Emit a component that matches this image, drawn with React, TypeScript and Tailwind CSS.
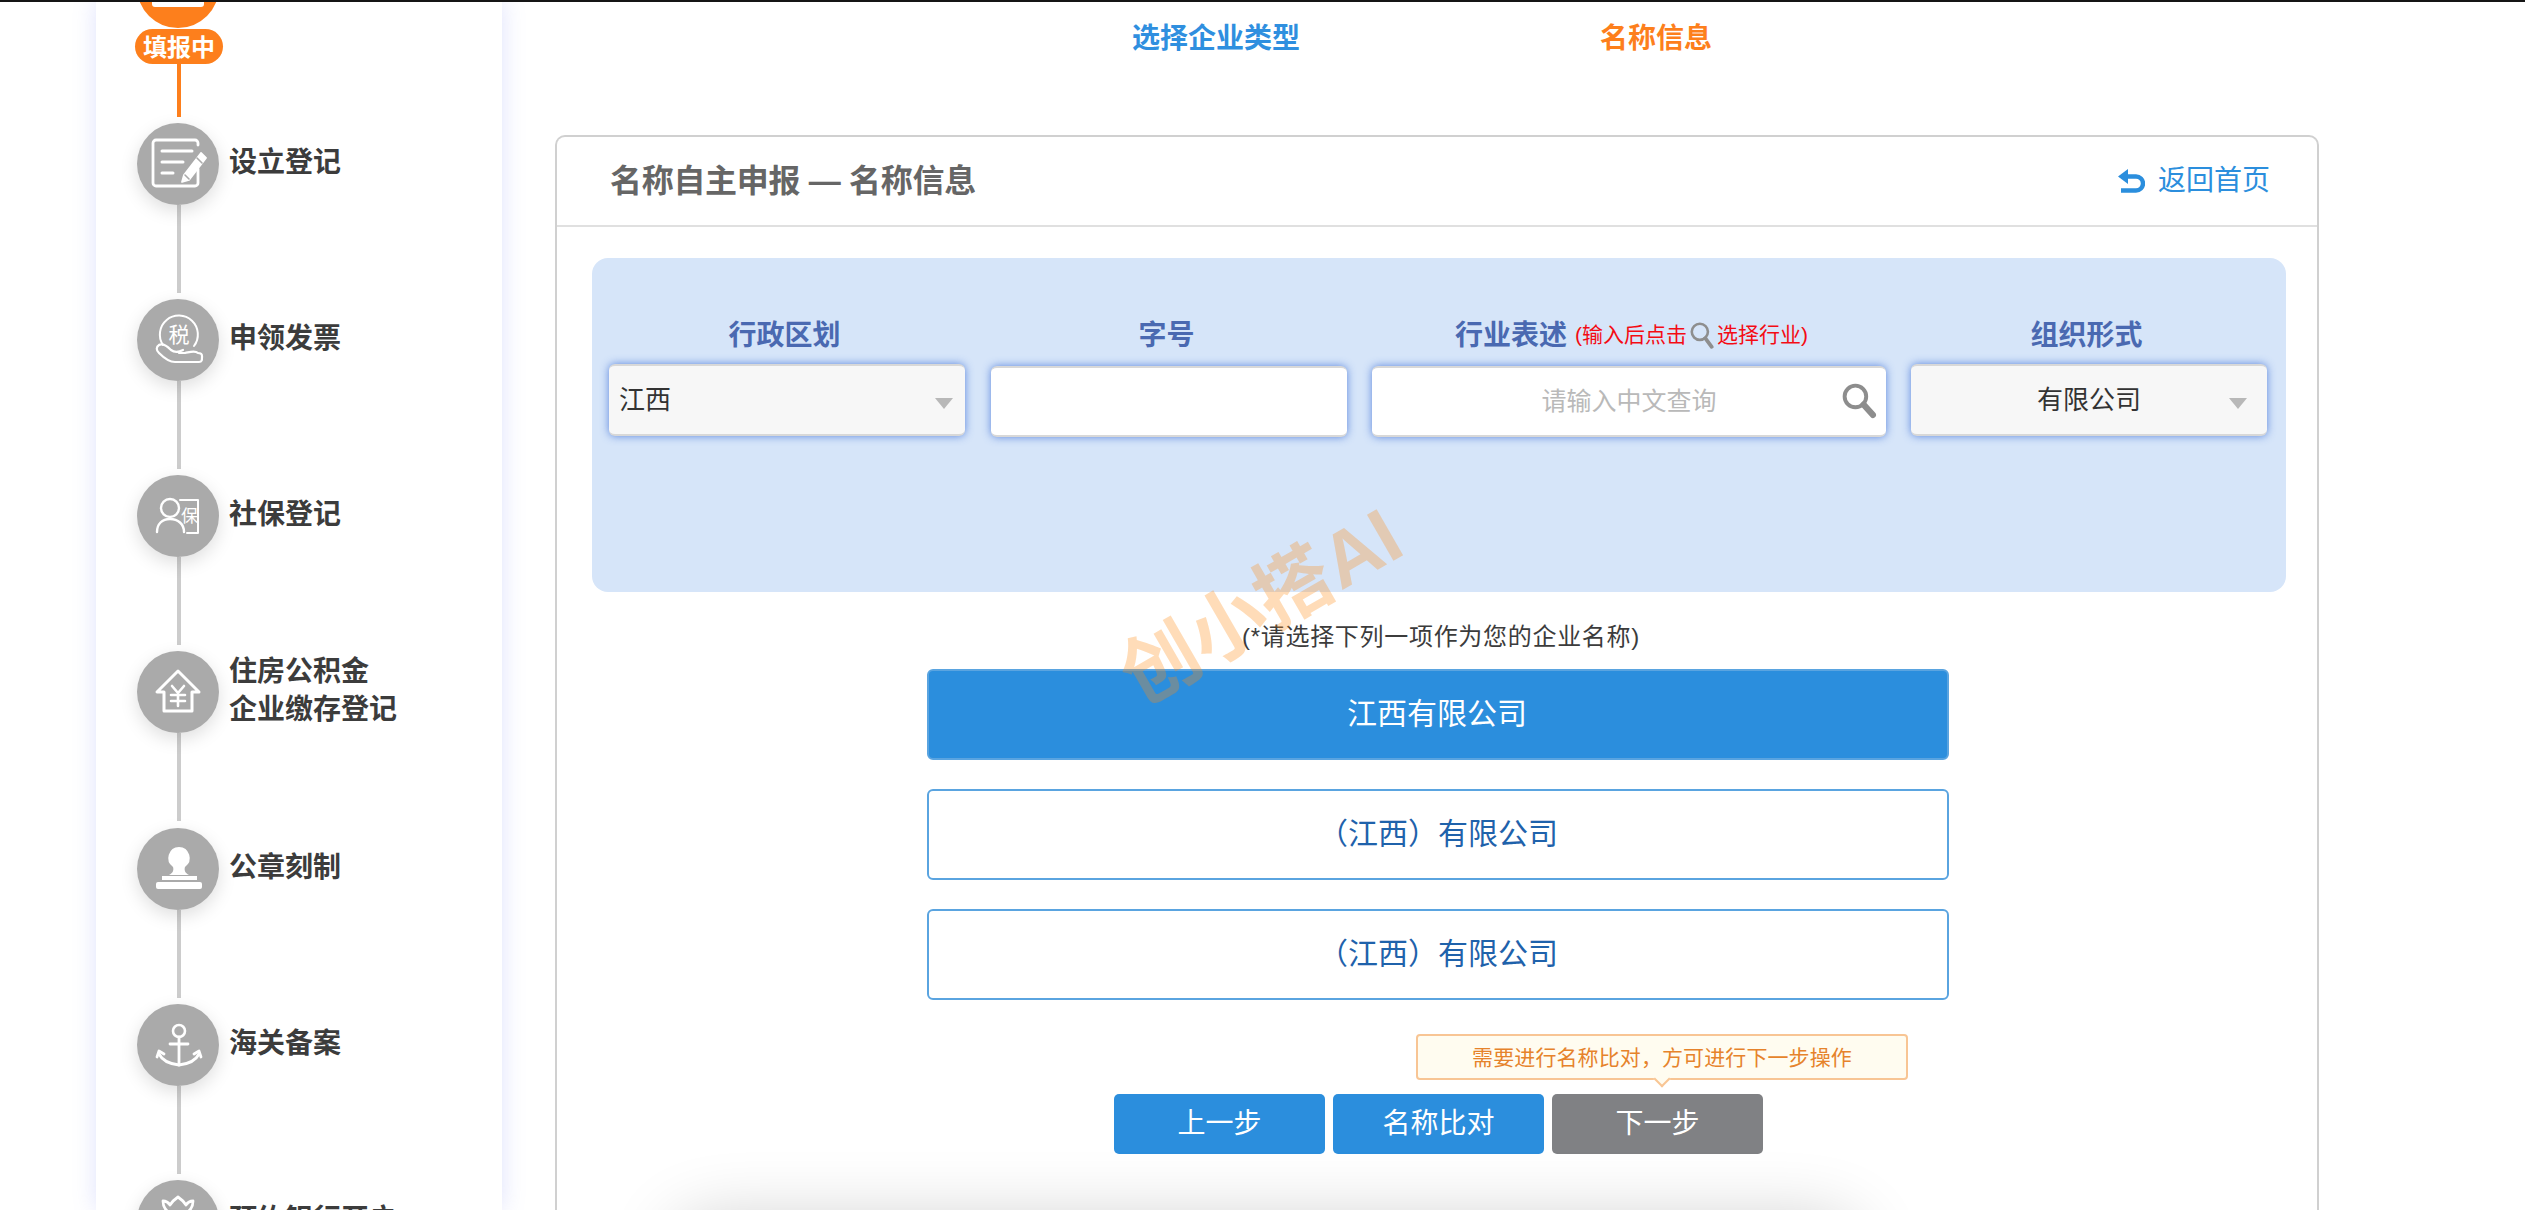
import React from "react";

const FONT = "font-['Liberation_Sans','Noto_Sans_CJK_SC',sans-serif]";

function Ic({ children }: { children: React.ReactNode }) {
  return (
    <svg viewBox="0 0 82 82" className="w-[82px] h-[82px]" fill="none" stroke="#fff" strokeWidth="2.4" strokeLinecap="round" strokeLinejoin="round">
      {children}
    </svg>
  );
}

const icons: Record<string, React.ReactNode> = {
  reg: (
    <Ic>
      <path d="M61 22v-2a3 3 0 0 0-3-3H19a3 3 0 0 0-3 3v40a3 3 0 0 0 3 3h39a3 3 0 0 0 3-3V46" strokeWidth="2.8" />
      <path d="M25 28h30M25 39h21M25 50h11" strokeWidth="3" />
      <path d="M47 52l-2 7 7-2 17-22-5-5z" fill="#fff" strokeWidth="1.8" />
      <path d="M60 35l5 5M48 52l4 4" stroke="#aaaaaa" strokeWidth="1.6" />
    </Ic>
  ),
  tax: (
    <Ic>
      <path d="M26 46a19 19 0 1 1 31 1" strokeWidth="2" />
      <text x="42" y="43" textAnchor="middle" fontSize="21" fill="#fff" stroke="none">税</text>
      <path d="M22 46c-3 2-3 5 0 8 5 5 10 9 16 9h24c3 0 3-2 3-5v-1c0-3-2-3-4-3-3-3-8-1-13 0h-6M22 46c4-2 8 1 12 5 4 3 8 2 12 0" strokeWidth="2.2" />
    </Ic>
  ),
  soc: (
    <Ic>
      <circle cx="33" cy="33" r="9" strokeWidth="2.4" />
      <path d="M20 57c0-8 5-13 13-13s14 5 14 13" strokeWidth="2.4" />
      <path d="M43 25h18v33H50" strokeWidth="2" />
      <text x="52.5" y="47" textAnchor="middle" fontSize="17" fill="#fff" stroke="none">保</text>
    </Ic>
  ),
  house: (
    <Ic>
      <path d="M41 20L20 41h7v19h28V41h7z" strokeWidth="3" />
      <path d="M35 35l6 7 6-7M34 44h14M34 50h14M41 42v13" strokeWidth="2.6" />
    </Ic>
  ),
  stamp: (
    <svg viewBox="0 0 82 82" className="w-[82px] h-[82px]" fill="#fff">
      <path d="M42 19a11 11 0 0 1 6 20c-1 3 0 6 4 8H32c4-2 5-5 4-8a11 11 0 0 1 6-20z" />
      <rect x="25" y="48" width="35" height="4" />
      <rect x="19" y="54" width="46" height="7" rx="2" />
    </svg>
  ),
  anchor: (
    <Ic>
      <circle cx="42" cy="27" r="6" strokeWidth="2.6" />
      <path d="M42 33v28M33 40h18" strokeWidth="2.8" />
      <path d="M22 50c3 6 11 10 20 11 9-1 17-5 20-11" strokeWidth="2.8" />
      <path d="M20 53l2-6 5 3M64 53l-2-6-5 3" strokeWidth="2.8" />
    </Ic>
  ),
  bank: (
    <Ic>
      <path d="M26 21c0 8 6 14 15 14s15-6 15-14c-3 0-5 1-7 4-2-3-5-6-8-8-3 2-6 5-8 8-2-3-4-4-7-4z" strokeWidth="2.8" />
    </Ic>
  ),
};

const steps = [
  { icon: "reg", label: ["设立登记"] },
  { icon: "tax", label: ["申领发票"] },
  { icon: "soc", label: ["社保登记"] },
  { icon: "house", label: ["住房公积金", "企业缴存登记"] },
  { icon: "stamp", label: ["公章刻制"] },
  { icon: "anchor", label: ["海关备案"] },
  { icon: "bank", label: ["预约银行开户"] },
];

function Step({ icon, label, last }: { icon: string; label: string[]; last: boolean }) {
  return (
    <div className="h-[176.3px] shrink-0">
      <div className="flex items-center h-[82px]">
        <div className="w-[82px] h-[82px] rounded-full bg-[#aaaaaa] shadow-[0_6px_18px_rgba(0,0,0,0.13)] shrink-0 flex items-center justify-center">
          {icons[icon]}
        </div>
        <div className="ml-[10px] -mt-[2px] text-[28px] leading-[38px] font-bold text-[#3c3c3c] whitespace-nowrap">
          {label.map((l) => (
            <div key={l}>{l}</div>
          ))}
        </div>
      </div>
      {!last && <div className="ml-[40px] w-[4px] h-[88px] bg-[#cccccc]" />}
    </div>
  );
}

function Arrow({ cls }: { cls: string }) {
  return <span className={`w-0 h-0 border-x-[9px] border-x-transparent border-t-[11px] border-t-[#b8b8b8] ${cls}`} />;
}

function Field({ children, cls }: { children: React.ReactNode; cls: string }) {
  return (
    <div className={`relative h-[71px] rounded-[6px] border-t-[2px] border-b-[2px] border-[#d8d8d8] shadow-[0_0_8px_rgba(60,110,215,0.8)] flex items-center text-[26px] ${cls}`}>
      {children}
    </div>
  );
}

function Label({ text, cls }: { text: string; cls?: string }) {
  return <span className={`text-[28px] font-bold text-[#4a69b1] leading-[38px] ${cls ?? ""}`}>{text}</span>;
}

function Opt({ text, active }: { text: string; active?: boolean }) {
  return (
    <div
      className={`h-[91px] rounded-[6px] border-[2px] flex items-center justify-center pb-[2px] text-[30px] ${
        active ? "bg-[#2b8edd] border-[#5aa4e0] text-white pr-[2px]" : "bg-white border-[#5aa4e0] text-[#1f62ab]"
      }`}
    >
      {text}
    </div>
  );
}

function Btn({ text, gray }: { text: string; gray?: boolean }) {
  return (
    <div className={`w-[211px] h-[60px] rounded-[5px] flex items-center justify-center text-[28px] text-white ${gray ? "bg-[#808184]" : "bg-[#2b8edd]"}`}>
      {text}
    </div>
  );
}

export default function App() {
  return (
    <div className={`${FONT} relative w-[2525px] h-[1210px] overflow-hidden bg-white flex`}>
      <div className="absolute top-0 left-0 right-0 h-[2px] bg-[#151515] z-20" />

      {/* Sidebar */}
      <aside className="ml-[96px] w-[406px] h-[1210px] bg-white shadow-[0_0_22px_rgba(110,125,240,0.22)] shrink-0 pl-[41px] flex flex-col overflow-hidden">
        <div className="shrink-0 h-[122.6px] relative">
          <div className="absolute left-0 top-[-54px] w-[82px] h-[82px] rounded-full bg-[#fd7f1c] flex items-end justify-center pb-[21px]">
            <div className="w-[52px] h-[24px] rounded-[3px] bg-white" />
          </div>
          <div className="absolute left-[-2px] top-[29px] w-[88px] h-[35px] rounded-full bg-[#fd7f1c] text-white font-bold text-[24px] leading-[37px] text-center whitespace-nowrap">
            填报中
          </div>
          <div className="absolute left-[40px] top-[64px] w-[4px] h-[53px] bg-[#fd7f1c]" />
        </div>
        {steps.map((s, i) => (
          <Step key={s.icon} icon={s.icon} label={s.label} last={i === steps.length - 1} />
        ))}
      </aside>

      {/* Main */}
      <main className="ml-[53px] w-[1764px] shrink-0 flex flex-col">
        {/* Step titles */}
        <div className="h-[135px] shrink-0">
          <div className="flex pt-[19px] pl-[577px] text-[28px] font-bold leading-[40px]">
            <span className="text-[#2f8fdf] w-[468px]">选择企业类型</span>
            <span className="text-[#fd7f1c]">名称信息</span>
          </div>
        </div>

        {/* Card */}
        <div className="flex-1 border-[2px] border-b-0 border-[#d0d0d0] rounded-t-[10px] bg-white">
          <div className="h-[90px] border-b-[2px] border-[#e0e0e0] flex items-center justify-between pl-[53px] pr-[47px]">
            <span className="text-[32px] font-bold text-[#666666] whitespace-nowrap tracking-[-0.3px]">名称自主申报 — 名称信息</span>
            <span className="flex items-center text-[28px] text-[#2b8edd]">
              <svg viewBox="0 0 27 24" className="w-[27px] h-[24px] mr-[13px]" fill="none" stroke="#2b8edd">
                <path d="M10 0L0 7.5 10 15z" fill="#2b8edd" stroke="none" />
                <path d="M8 7.5h10a7 7 0 0 1 0 14H3" strokeWidth="4.4" />
              </svg>
              返回首页
            </span>
          </div>

          <div className="pt-[31px] pl-[35px] pr-[31px]">
            {/* Blue panel */}
            <div className="h-[334px] rounded-[16px] bg-[#d6e5f9] pt-[59px] pl-[17px]">
              <div className="flex">
                <div className="w-[356px] flex flex-col items-center mr-[26px]">
                  <Label text="行政区划" cls="mr-[5px]" />
                  <div className="w-full mt-[9px]">
                    <Field cls="bg-[#f7f7f7] pl-[10px] h-[72px]">
                      <span className="text-[#333333]">江西</span>
                      <Arrow cls="absolute right-[12px] top-[32px]" />
                    </Field>
                  </div>
                </div>
                <div className="w-[356px] flex flex-col items-center mr-[25px]">
                  <Label text="字号" cls="mr-[5px]" />
                  <div className="w-full mt-[11px]">
                    <Field cls="bg-white"> </Field>
                  </div>
                </div>
                <div className="w-[514px] flex flex-col mr-[25px]">
                  <div className="flex items-center pl-[83px] whitespace-nowrap">
                    <Label text="行业表述" />
                    <span className="ml-[8px] -mt-[3px] text-[21px] text-[#f40b14] flex items-center">
                      (输入后点击
                      <svg viewBox="0 0 24 26" className="w-[28px] h-[28px] mx-[1px]" fill="none" stroke="#8e8e8e">
                        <circle cx="10" cy="10" r="7.5" strokeWidth="2.4" />
                        <path d="M15 16l6 8" strokeWidth="3.5" strokeLinecap="round" />
                      </svg>
                      选择行业)
                    </span>
                  </div>
                  <div className="w-full mt-[11px]">
                    <Field cls="bg-white justify-center">
                      <span className="text-[#b9b9b9] text-[25px]">请输入中文查询</span>
                      <svg viewBox="0 0 34 36" className="absolute right-[9px] top-[14px] w-[37px] h-[37px]" fill="none" stroke="#8d8d8d">
                        <circle cx="14" cy="14" r="10.5" strokeWidth="3.8" />
                        <path d="M22 22l9 10" strokeWidth="6" strokeLinecap="round" />
                      </svg>
                    </Field>
                  </div>
                </div>
                <div className="w-[356px] flex flex-col items-center">
                  <Label text="组织形式" cls="mr-[5px]" />
                  <div className="w-full mt-[9px]">
                    <Field cls="bg-[#f7f7f7] justify-center h-[72px]">
                      <span className="text-[#333333]">有限公司</span>
                      <Arrow cls="absolute right-[20px] top-[32px]" />
                    </Field>
                  </div>
                </div>
              </div>
            </div>

            {/* Names */}
            <div className="ml-[335px] w-[1022px]">
              <div className="h-[77px] pt-[28px] text-[24px] leading-[34px] text-[#3c3c3c] text-center whitespace-nowrap pl-[6px] tracking-[0.7px]">
                (*请选择下列一项作为您的企业名称)
              </div>
              <div className="flex flex-col gap-[29px]">
                <Opt text="江西有限公司" active />
                <Opt text="（江西）有限公司" />
                <Opt text="（江西）有限公司" />
              </div>
            </div>

            {/* Actions */}
            <div className="mt-[34px]">
              <div className="ml-[824px] w-[492px] h-[46px] relative bg-[#fffcf0] border-[2px] border-[#f8c594] rounded-[4px] flex items-center justify-center pt-[2px] text-[21px] tracking-[0.1px] text-[#e6832b] whitespace-nowrap">
                需要进行名称比对，方可进行下一步操作
                <span className="absolute left-[238px] top-[37px] w-[12px] h-[12px] rotate-45 bg-[#fffcf0] border-r-[2px] border-b-[2px] border-[#f8c594]" />
              </div>
              <div className="mt-[14px] ml-[522px] flex gap-[8px]">
                <Btn text="上一步" />
                <Btn text="名称比对" />
                <Btn text="下一步" gray />
              </div>
            </div>
          </div>
        </div>
      </main>

      {/* Watermark */}
      <div className="absolute left-[1107px] top-[549px] -rotate-[30deg] text-[77px] font-bold text-[rgba(255,140,20,0.3)] whitespace-nowrap z-10 pointer-events-none">
        创小搭AI
      </div>

      {/* Bottom shade */}
      <div className="absolute left-[692px] w-[1148px] top-[1240px] h-[40px] shadow-[0_0_70px_20px_rgba(0,0,0,0.2)] rounded-[30px] z-10 pointer-events-none" />
    </div>
  );
}
